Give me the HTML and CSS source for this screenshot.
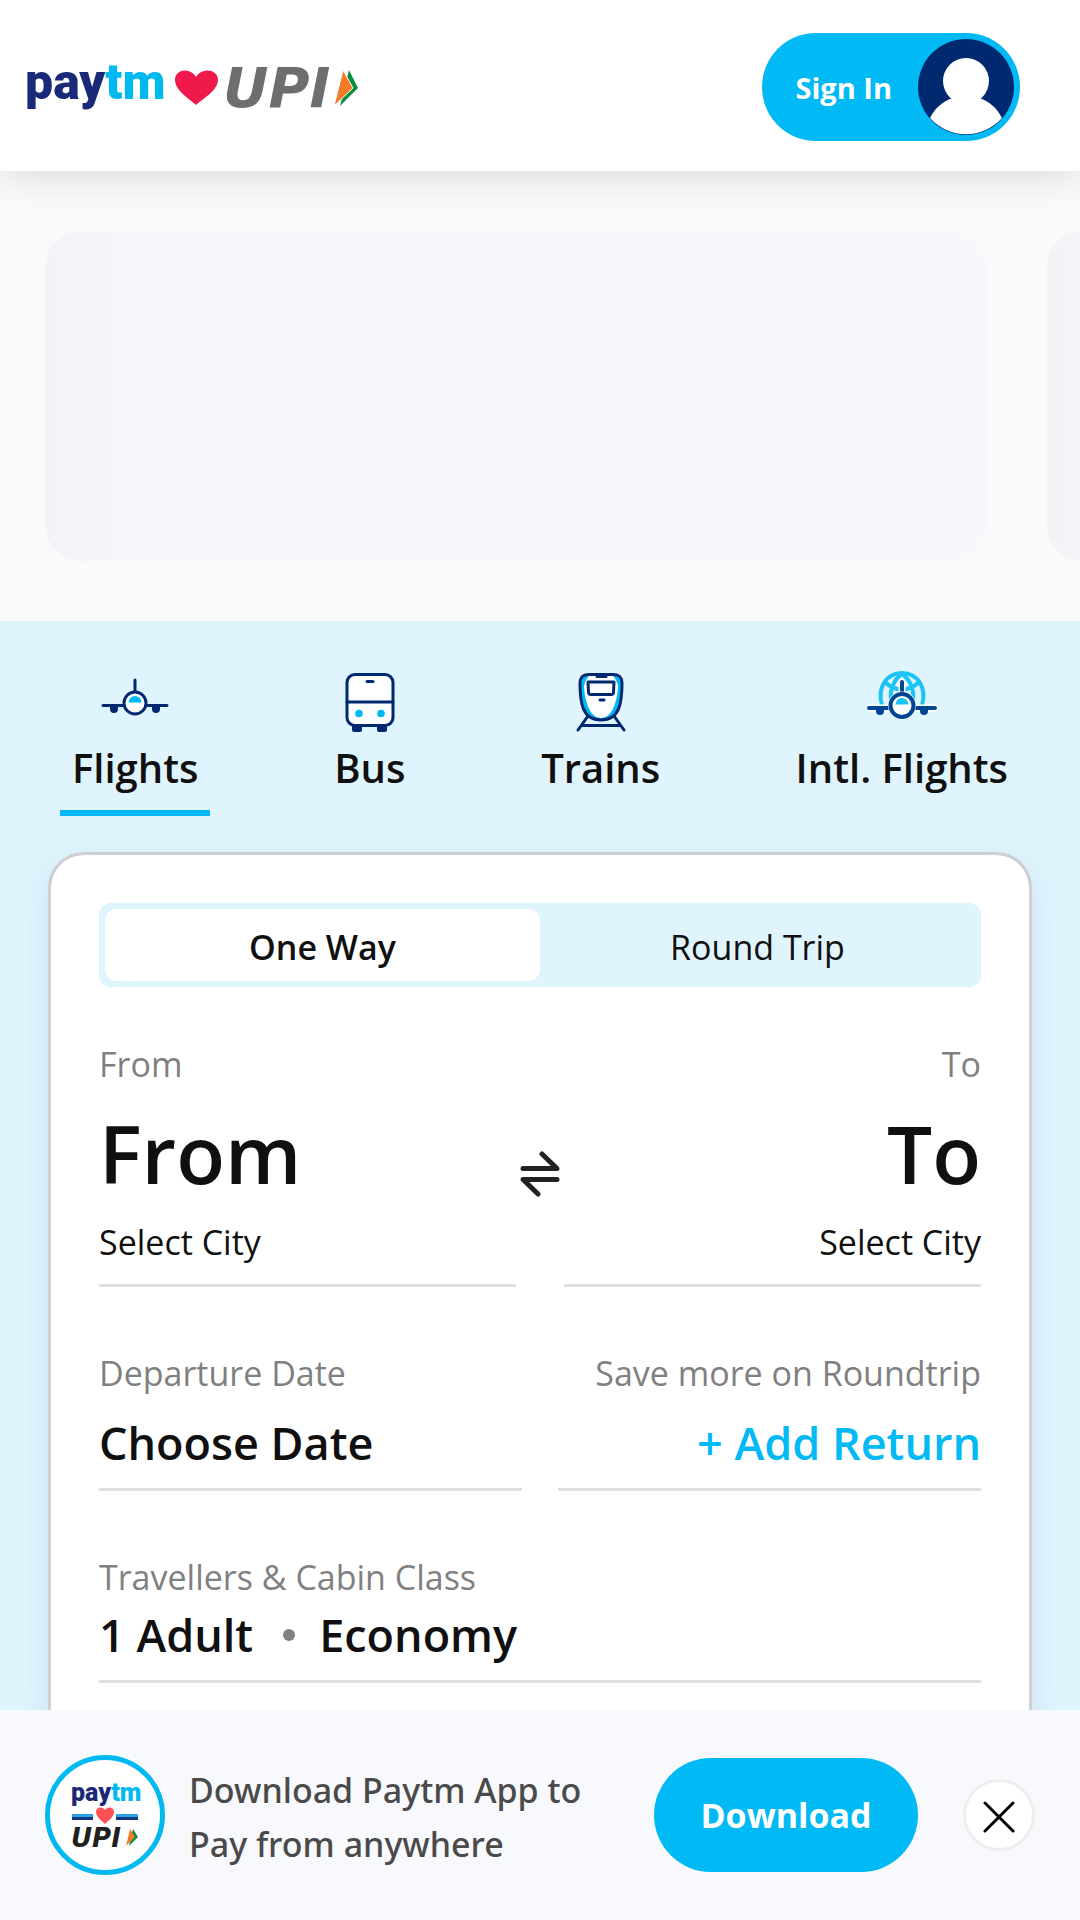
FILE: index.html
```html
<!DOCTYPE html>
<html lang="en">

<head>
    <meta charset="UTF-8">
    <meta name="viewport" content="width=device-width, initial-scale=1.0">
    <title>Paytm - Flights, Bus and Train Tickets</title>
    <link rel="stylesheet" href="styles.css">
</head>

<body>
    <header class="header">
        <a href="#" class="logo" aria-label="Paytm UPI">
            <svg width="344" height="88" viewBox="-4 -20 344 88">
                <text class="logo-paytm" x="-2" y="36"><tspan fill="#1b2a78">pay</tspan><tspan fill="#00b9f1">tm</tspan></text>
                <path d="M169 42 C164 37 148 28 148 17 C148 6 163 4 169 14 C175 4 191 6 191 17 C191 28 174 37 169 42Z" fill="#ef1a4b"/>
                <text class="logo-upi" x="196" y="44" fill="#6d6e70">UPI</text>
                <path d="M322 7 L331 25 L313 43Z" fill="#0c8e42"/>
                <path d="M316 7 L326 25 L307 43Z" fill="#f47b28" stroke="#fff" stroke-width="1"/>
            </svg>
        </a>
        <button class="sign-in" type="button">
            <span>Sign In</span>
            <svg width="96" height="96" viewBox="0 0 96 96">
                <circle cx="48" cy="48" r="48" fill="#002970"/>
                <circle cx="48" cy="42" r="23" fill="#fff"/>
                <path d="M12 79 C17 69 25 62 35 59 C43 63 53 63 61 59 C71 62 79 69 84 79 A48 48 0 0 1 12 79Z" fill="#fff"/>
            </svg>
        </button>
    </header>

    <section class="offers">
        <div class="offer"></div>
        <div class="offer"></div>
    </section>

    <main class="travel">
        <nav class="tabs">
            <a href="#" class="tab active">
                <svg class="icon" viewBox="0 0 72 72">
                    <path d="M36 14V26M4 39.5H24M48 39.5H68" stroke="#002970" stroke-width="3" stroke-linecap="round"/>
                    <path d="M11 40h8v3a4 4 0 0 1-8 0zM53 40h8v3a4 4 0 0 1-8 0z" fill="#002970"/>
                    <circle cx="36" cy="37" r="11" fill="#fff" stroke="#002970" stroke-width="3"/>
                    <path d="M29.5 36.5a6.5 6.5 0 0 1 13 0z" fill="#00b9f5"/>
                </svg>
                <span>Flights</span>
            </a>
            <a href="#" class="tab">
                <svg class="icon" viewBox="0 0 72 72">
                    <path d="M18 59h10v5a2 2 0 0 1-2 2h-6a2 2 0 0 1-2-2zM43 59h10v5a2 2 0 0 1-2 2h-6a2 2 0 0 1-2-2z" fill="#002970"/>
                    <rect x="13" y="8.5" width="46" height="51" rx="8" fill="#fff" stroke="#002970" stroke-width="3"/>
                    <path d="M13 36H59M33 15.5H39" stroke="#002970" stroke-width="3" stroke-linecap="round"/>
                    <circle cx="25" cy="47.5" r="3.8" fill="#00b9f5"/>
                    <circle cx="47" cy="47.5" r="3.8" fill="#00b9f5"/>
                </svg>
                <span>Bus</span>
            </a>
            <a href="#" class="tab">
                <svg class="icon" viewBox="0 0 72 72" fill="none" stroke="#002970" stroke-width="3" stroke-linecap="round" stroke-linejoin="round">
                    <path d="M23 50L13 64M49 50L59 64M18 59.5H54"/>
                    <path d="M23 8.5H49C54 8.5 57 12 57 17C57 36 55 54 36 54C17 54 15 36 15 17C15 12 18 8.5 23 8.5Z" fill="#00b9f5"/>
                    <path d="M24 10H48C50 12 53 17 53 21C52 36 47 52 36 52C25 52 20 36 19 21C19 17 22 12 24 10Z" fill="#fff" stroke="none"/>
                    <path d="M23 16H49L48.5 26C48.5 28 48 28.5 46 28.5H26C24 28.5 23.5 28 23.5 26Z" fill="#fff"/>
                    <path d="M32 10.5H41M35 34H39"/>
                </svg>
                <span>Trains</span>
            </a>
            <a href="#" class="tab">
                <svg class="icon" viewBox="0 0 72 72">
                    <g fill="none" stroke="#1cc4f5" stroke-width="4">
                        <path d="M16 39C11 22 20 7 36 7S61 22 56 39"/>
                        <path d="M26 38C22 26 28 13 36 8C44 13 50 26 46 38"/>
                        <path d="M19 16C29 26 43 26 53 16"/>
                    </g>
                    <path d="M36 16V26M4 42H24M48 42H68" stroke="#fff" stroke-width="7" stroke-linecap="round"/>
                    <path d="M36 16V26M3 42H24M48 42H69" stroke="#014594" stroke-width="4" stroke-linecap="round"/>
                    <path d="M10 42h8v3a4 4 0 0 1-8 0zM54 42h8v3a4 4 0 0 1-8 0z" fill="#014594"/>
                    <circle cx="36" cy="39.5" r="14" fill="#fff"/>
                    <circle cx="36" cy="39.5" r="11.5" fill="#fff" stroke="#014594" stroke-width="4"/>
                    <path d="M29.5 38.5a6.5 6.5 0 0 1 13 0z" fill="#1cc4f5"/>
                </svg>
                <span>Intl. Flights</span>
            </a>
        </nav>

        <div class="card">
            <div class="toggle">
                <button class="toggle-btn selected" type="button">One Way</button>
                <button class="toggle-btn" type="button">Round Trip</button>
            </div>

            <div class="route">
                <button class="field city" type="button">
                    <span class="label">From</span>
                    <span class="code">From</span>
                    <span class="name">Select City</span>
                </button>
                <button class="swap" type="button" aria-label="Swap cities">
                    <svg width="40" height="46" viewBox="0 0 40 46" fill="none" stroke="#222" stroke-width="5" stroke-linecap="round" stroke-linejoin="round">
                        <path d="M3 17.5H37L22 3M37 28.5H3L18 43"/>
                    </svg>
                </button>
                <button class="field city right" type="button">
                    <span class="label">To</span>
                    <span class="code">To</span>
                    <span class="name">Select City</span>
                </button>
            </div>

            <div class="dates">
                <button class="field date" type="button">
                    <span class="label">Departure Date</span>
                    <span class="value">Choose Date</span>
                </button>
                <button class="field date right" type="button">
                    <span class="label">Save more on Roundtrip</span>
                    <span class="value add">+ Add Return</span>
                </button>
            </div>

            <button class="field travellers" type="button">
                <span class="label">Travellers &amp; Cabin Class</span>
                <span class="value pax">1 Adult <i class="dot"></i> Economy</span>
            </button>
        </div>
    </main>

    <footer class="app-bar">
        <svg class="app-logo" width="120" height="120" viewBox="0 0 120 120">
            <circle cx="60" cy="60" r="57.5" fill="#fff" stroke="#00b9f1" stroke-width="5"/>
            <text class="small-paytm" x="26" y="46"><tspan fill="#1b2a78">pay</tspan><tspan fill="#00b9f1">tm</tspan></text>
            <path d="M27 59H48V62H27ZM71 59H93V62H71Z" fill="#2ca5e8"/>
            <path d="M27 62H48V65H27ZM71 62H93V65H71Z" fill="#12377f"/>
            <path d="M60 69C57 66 51 62 51 57C51 52 57 51 60 55C63 51 69 52 69 57C69 62 63 66 60 69Z" fill="#fd5154"/>
            <text class="small-upi" x="26" y="92" fill="#231f20">UPI</text>
            <path d="M88 74L93 82L84 91Z" fill="#0c8e42"/>
            <path d="M85 74L90 82L81 91Z" fill="#f47b28"/>
        </svg>
        <p class="app-text">Download Paytm App to Pay from anywhere</p>
        <a href="#" class="download">Download</a>
        <button class="close" type="button" aria-label="Close">
            <svg width="32" height="32" viewBox="0 0 32 32" stroke="#000" stroke-width="3" stroke-linecap="round">
                <path d="M2 2L30 30M30 2L2 30"/>
            </svg>
        </button>
    </footer>
</body>

</html>
```

FILE: styles.css
```css
* {
    box-sizing: border-box;
}

body {
    margin: 0;
    min-height: 100vh;
    display: flex;
    flex-direction: column;
    font-family: "Open Sans", "Noto Sans", sans-serif;
    color: #101010;
    background-color: #fafafa;
    overflow-x: hidden;
}

button {
    font-family: inherit;
    color: inherit;
    background: none;
    border: none;
    padding: 0;
    cursor: pointer;
}

a {
    color: inherit;
    text-decoration: none;
}

svg {
    display: block;
    flex-shrink: 0;
}

/* header */

.header {
    display: flex;
    justify-content: space-between;
    align-items: center;
    padding: 33px 60px 30px 23px;
    background-color: #fff;
    box-shadow: 0 6px 36px rgba(0, 0, 0, 0.12);
    z-index: 1;
}

.logo-paytm {
    font-family: Roboto, sans-serif;
    font-weight: 900;
    font-size: 50px;
}

.logo-upi {
    font-family: "DejaVu Sans", sans-serif;
    font-style: italic;
    font-weight: bold;
    font-size: 56px;
}

.sign-in {
    display: flex;
    align-items: center;
    gap: 26px;
    padding: 6px 6px 6px 34px;
    border-radius: 54px;
    background-color: #00b9f5;
    color: #fff;
    font-size: 29px;
    font-weight: 700;
}

/* offers */

.offers {
    display: flex;
    gap: 60px;
    padding: 60px 45px;
    overflow: hidden;
}

.offer {
    flex: 0 0 calc(100vw - 138px);
    height: 330px;
    border-radius: 36px;
    background: linear-gradient(90deg, #f2f3f6 0, #f7f8fb 110px, #f7f8fb 100%);
}

/* travel */

.travel {
    flex: 1;
    display: flex;
    flex-direction: column;
    gap: 36px;
    padding: 45px 48px 0;
    background-color: #e0f4fe;
}

.tabs {
    display: flex;
    justify-content: space-between;
    padding: 0 12px;
}

.tab {
    display: flex;
    flex-direction: column;
    align-items: center;
    padding: 0 12px 12px;
    border-bottom: 6px solid transparent;
    font-size: 40px;
    font-weight: 600;
    line-height: 60px;
}

.tab.active {
    border-bottom-color: #00b9f5;
}

.icon {
    width: 72px;
    height: 72px;
}

.card {
    flex: 1;
    padding: 48px 48px 24px;
    border: 3px solid #ccd0d3;
    border-bottom: none;
    border-radius: 36px 36px 0 0;
    background-color: #fff;
    box-shadow: 0 12px 30px rgba(0, 60, 90, 0.1);
}

.toggle {
    display: grid;
    grid-template-columns: 1fr 1fr;
    padding: 6px;
    border-radius: 12px;
    background-color: #e0f4fe;
}

.toggle-btn {
    height: 72px;
    padding-top: 3px;
    border-radius: 12px;
    font-size: 34px;
}

.toggle-btn.selected {
    background-color: #fff;
    font-weight: 600;
}

.field {
    display: flex;
    flex-direction: column;
    flex: 1;
    border-bottom: 3px solid #e0e0e0;
    text-align: left;
}

.field.right {
    text-align: right;
}

.label,
.name {
    font-size: 34px;
    line-height: 48px;
}

.label {
    color: #808080;
}

.route {
    display: flex;
    margin-top: 53px;
}

.city {
    gap: 11px;
    padding-bottom: 18px;
}

.code {
    font-size: 80px;
    font-weight: 600;
    line-height: 108px;
}

.swap {
    width: 48px;
    display: flex;
    align-items: center;
    justify-content: center;
    padding-top: 20px;
}

.dates {
    display: flex;
    gap: 36px;
    margin: 62px 0;
}

.date {
    gap: 16px;
    padding-bottom: 15px;
}

.value {
    font-size: 45px;
    font-weight: 600;
    line-height: 60px;
}

.add {
    color: #00b9f5;
}

.travellers {
    width: 100%;
    gap: 4px;
    padding-bottom: 15px;
}

.pax {
    display: flex;
    align-items: center;
}

.dot {
    width: 12px;
    height: 12px;
    margin: 0 24px 0 30px;
    border-radius: 50%;
    background-color: #808080;
}

/* app download bar */

.app-bar {
    display: flex;
    align-items: center;
    padding: 45px;
    background-color: #f8f9fd;
}

.small-paytm {
    font-family: Roboto, sans-serif;
    font-weight: 900;
    font-size: 25px;
}

.small-upi {
    font-family: "DejaVu Sans", sans-serif;
    font-style: italic;
    font-weight: bold;
    font-size: 26px;
}

.app-text {
    flex: 1;
    margin: 0 30px 0 24px;
    padding-top: 3px;
    color: #4a4a4a;
    font-family: "Noto Sans", sans-serif;
    font-size: 34px;
    font-weight: 500;
    line-height: 54px;
}

.download {
    width: 264px;
    border-radius: 57px;
    background-color: #00b9f5;
    color: #fff;
    font-size: 34px;
    font-weight: 700;
    line-height: 114px;
    text-align: center;
}

.close {
    width: 72px;
    height: 72px;
    margin-left: 45px;
    display: flex;
    align-items: center;
    justify-content: center;
    padding-top: 3px;
    border: 3px solid #eeeef0;
    border-radius: 50%;
    background-color: #fff;
}
```
